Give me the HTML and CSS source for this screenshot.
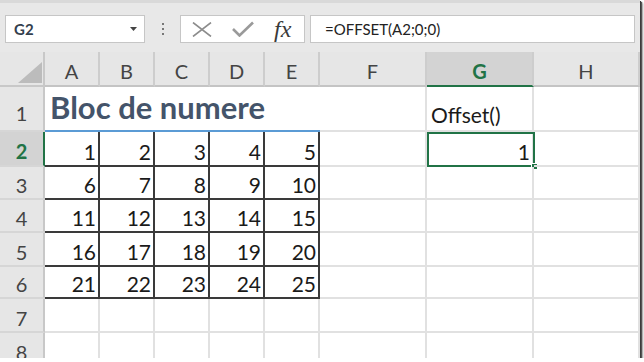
FILE: index.html
```html
<!DOCTYPE html>
<html lang="ro">
<head>
    <meta charset="UTF-8">
    <title>Bloc de numere</title>
    <link rel="stylesheet" href="styles.css">
</head>
<body>
    <div class="window">
        <div class="toolbar">
            <div class="namebox">
                <span>G2</span>
                <svg width="7" height="4" viewBox="0 0 7 4"><polygon points="0,0 7,0 3.5,4" fill="#444"/></svg>
            </div>
            <div class="grip"><i></i><i></i><i></i></div>
            <div class="fxbox">
                <svg class="icon-x" width="20" height="15" viewBox="0 0 20 15"><path d="M1 0.5 L19 14.5 M19 0.5 L1 14.5" stroke="#8c8c8c" stroke-width="1.6" fill="none"/></svg>
                <svg class="icon-ok" width="22" height="16" viewBox="0 0 22 16"><polyline points="1,8 7.5,14.5 21,1.5" stroke="#9a9a9a" stroke-width="2.6" fill="none"/></svg>
                <span class="fx">fx</span>
            </div>
            <div class="formula">=OFFSET(A2;0;0)</div>
        </div>

        <div class="sheet">
            <!-- column headers -->
            <div class="corner"><svg width="24" height="21" viewBox="0 0 24 21"><polygon points="0,21 24,21 24,0" fill="#bcbcbc"/></svg></div>
            <div class="hd">A</div>
            <div class="hd">B</div>
            <div class="hd">C</div>
            <div class="hd">D</div>
            <div class="hd">E</div>
            <div class="hd">F</div>
            <div class="hd sel">G</div>
            <div class="hd">H</div>

            <!-- row 1 -->
            <div class="rh r1">1</div>
            <div class="c title">Bloc de numere</div>
            <div class="c"></div>
            <div class="c label">Offset()</div>
            <div class="c"></div>

            <!-- row 2 -->
            <div class="rh sel">2</div>
            <div class="c t">1</div>
            <div class="c t">2</div>
            <div class="c t">3</div>
            <div class="c t">4</div>
            <div class="c t">5</div>
            <div class="c"></div>
            <div class="c num active">1<span class="handle"></span></div>
            <div class="c"></div>

            <!-- row 3 -->
            <div class="rh">3</div>
            <div class="c t">6</div>
            <div class="c t">7</div>
            <div class="c t">8</div>
            <div class="c t">9</div>
            <div class="c t">10</div>
            <div class="c"></div>
            <div class="c"></div>
            <div class="c"></div>

            <!-- row 4 -->
            <div class="rh">4</div>
            <div class="c t">11</div>
            <div class="c t">12</div>
            <div class="c t">13</div>
            <div class="c t">14</div>
            <div class="c t">15</div>
            <div class="c"></div>
            <div class="c"></div>
            <div class="c"></div>

            <!-- row 5 -->
            <div class="rh">5</div>
            <div class="c t">16</div>
            <div class="c t">17</div>
            <div class="c t">18</div>
            <div class="c t">19</div>
            <div class="c t">20</div>
            <div class="c"></div>
            <div class="c"></div>
            <div class="c"></div>

            <!-- row 6 -->
            <div class="rh">6</div>
            <div class="c t">21</div>
            <div class="c t">22</div>
            <div class="c t">23</div>
            <div class="c t">24</div>
            <div class="c t">25</div>
            <div class="c"></div>
            <div class="c"></div>
            <div class="c"></div>

            <!-- row 7 -->
            <div class="rh">7</div>
            <div class="c"></div>
            <div class="c"></div>
            <div class="c"></div>
            <div class="c"></div>
            <div class="c"></div>
            <div class="c"></div>
            <div class="c"></div>
            <div class="c"></div>

            <!-- row 8 -->
            <div class="rh">8</div>
            <div class="c"></div>
            <div class="c"></div>
            <div class="c"></div>
            <div class="c"></div>
            <div class="c"></div>
            <div class="c"></div>
            <div class="c"></div>
            <div class="c"></div>
        </div>
    </div>
</body>
</html>
```

FILE: styles.css
```css
body {
    margin: 0;
    background: #fff;
    font-family: 'Lato', 'Noto Sans', sans-serif;
}
.window {
    width: 640px;
    height: 358px;
    overflow: hidden;
    background: #fff;
    box-shadow: 1px 1px 0 #3c3c3c, 2px 2px 1px #555, 3px 3px 2px rgba(0, 0, 0, 0.35);
    display: flex;
    flex-direction: column;
}

/* formula bar */
.toolbar {
    flex: none;
    height: 52px;
    box-sizing: border-box;
    background: #e8e8e8;
    border-top: 3px solid #d9d9d9;
    padding: 12px 0 0 5px;
    display: flex;
    align-items: flex-start;
}
.namebox, .fxbox, .formula {
    height: 28px;
    box-sizing: border-box;
    background: #fff;
    border: 1px solid #c6c6c6;
    display: flex;
    align-items: center;
}
.namebox {
    width: 140px;
    justify-content: space-between;
    padding: 0 7px 0 8px;
    font-size: 15px;
    font-weight: bold;
    color: #34404e;
}
.grip {
    width: 3px;
    height: 28px;
    margin: 0 16px;
    display: flex;
    flex-direction: column;
    justify-content: center;
    align-items: center;
    gap: 3px;
}
.grip i {
    width: 2px;
    height: 2px;
    background: #777;
}
.fxbox {
    width: 125px;
    padding-left: 11px;
}
.icon-ok {
    margin-left: 20px;
    margin-top: -1px;
}
.fx {
    margin-left: 20px;
    font-family: 'Liberation Serif', serif;
    font-style: italic;
    font-size: 24px;
    color: #3a3a3a;
    line-height: 1;
}
.formula {
    margin-left: 5px;
    width: 325px;
    padding-left: 14px;
    font-size: 15px;
    color: #222;
}

/* grid */
.sheet {
    flex: none;
    display: grid;
    grid-template-columns: 45px repeat(5, 55px) 107px 107px 1fr;
    grid-template-rows: 35px 45px 35px 33px 33px 34px 32px 34px 34px;
}
.corner, .hd, .rh {
    background: #e6e6e6;
    box-sizing: border-box;
    color: #444;
    font-size: 20px;
    line-height: 1;
    display: flex;
    align-items: flex-end;
    justify-content: center;
}
.corner {
    border-right: 2px solid #c8c8c8;
    border-bottom: 2px solid #c8c8c8;
    justify-content: flex-end;
    padding: 0 1px 2px 0;
}
.hd {
    border-right: 2px solid #cdcdcd;
    border-bottom: 2px solid #c4c4c4;
    padding-bottom: 4px;
}
.rh {
    border-right: 2px solid #c8c8c8;
    border-bottom: 2px solid #d6d6d6;
    padding-bottom: 3px;
}
.rh.r1 {
    padding-bottom: 7px;
}
.hd.sel, .rh.sel {
    background: #d3d3d3;
    color: #217346;
    font-weight: bold;
}
.hd.sel {
    border-bottom-color: #217346;
}
.rh.sel {
    border-right-color: #217346;
    padding-bottom: 4px;
}

.c {
    position: relative;
    box-sizing: border-box;
    border-right: 2px solid #e1e1e1;
    border-bottom: 2px solid #e1e1e1;
    display: flex;
    align-items: flex-end;
    padding: 0 2px 3px 4px;
    font-size: 21px;
    line-height: 1;
    color: #1a1a1a;
}
.c.title {
    grid-column: span 5;
    border-right: none;
    border-bottom-color: #5b9bd5;
    padding: 0 0 7px 5px;
    font-size: 31px;
    font-weight: bold;
    color: #44546a;
}
.c.label {
    padding-bottom: 5px;
}
.c.t, .c.num {
    justify-content: flex-end;
}
.c.t {
    border-right-color: #3a3a3a;
    border-bottom-color: #3a3a3a;
}
.c.active::before {
    content: "";
    position: absolute;
    left: 0;
    top: 0;
    right: -3px;
    bottom: -2px;
    border: 2px solid #217346;
}
.handle {
    position: absolute;
    right: -6px;
    bottom: -5px;
    width: 5px;
    height: 5px;
    background: #217346;
    border: 1px solid #fff;
}
```
